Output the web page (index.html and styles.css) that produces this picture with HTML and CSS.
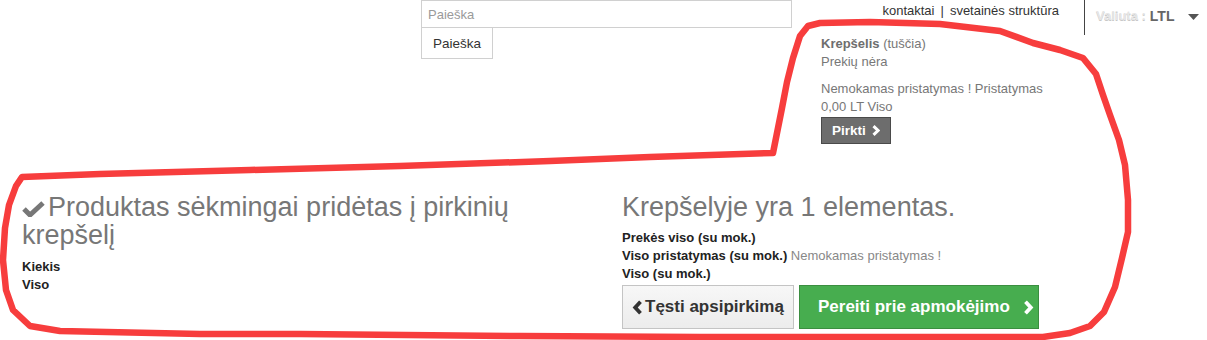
FILE: index.html
```html
<!DOCTYPE html>
<html lang="lt">
<head>
<meta charset="utf-8">
<title>Krepšelis</title>
<link rel="stylesheet" href="styles.css">
</head>
<body>
<div class="page">
  <header class="top">
    <form class="search">
      <input class="search-input" type="text" placeholder="Paieška">
      <button class="search-btn" type="button">Paieška</button>
    </form>
    <div class="side">
      <div class="toprow">
        <nav class="links"><a>kontaktai</a><span class="sep">|</span><a>svetainės struktūra</a></nav>
        <div class="currency">
          <span class="cur-label">Valiuta :</span>
          <span class="cur-value">LTL</span>
          <svg class="caret" width="11" height="6" viewBox="0 0 11 6"><path d="M0 0 H11 L5.5 6 Z" fill="#555"/></svg>
        </div>
      </div>
      <div class="cart">
        <div class="line"><b>Krepšelis</b> (tuščia)</div>
        <div class="line">Prekių nėra</div>
        <div class="line gap">Nemokamas pristatymas ! Pristatymas</div>
        <div class="line">0,00 LT Viso</div>
        <button class="buy" type="button">Pirkti<svg class="chev" width="8" height="11" viewBox="0 0 8 11"><path d="M1.5 1.2 L6 5.5 L1.5 9.8" fill="none" stroke="#fff" stroke-width="3"/></svg></button>
      </div>
    </div>
  </header>

  <main class="layer">
    <section class="added">
      <h1 class="title"><svg class="check" width="23" height="16" viewBox="0 0 23 16"><path d="M2 8 L8 14 L21 2" fill="none" stroke="#777" stroke-width="5"/></svg>Produktas sėkmingai pridėtas į pirkinių krepšelį</h1>
      <div class="info">
        <div class="row"><b>Kiekis</b></div>
        <div class="row"><b>Viso</b></div>
      </div>
    </section>
    <section class="summary">
      <h2 class="title">Krepšelyje yra 1 elementas.</h2>
      <div class="info">
        <div class="row"><b>Prekės viso (su mok.)</b></div>
        <div class="row"><b>Viso pristatymas (su mok.)</b> <span class="muted">Nemokamas pristatymas !</span></div>
        <div class="row"><b>Viso (su mok.)</b></div>
      </div>
      <div class="actions">
        <button class="btn btn-light" type="button"><svg class="chev-l" width="11" height="15" viewBox="0 0 11 15"><path d="M8.5 1.8 L3.2 7.5 L8.5 13.2" fill="none" stroke="#333" stroke-width="3.8"/></svg>Tęsti apsipirkimą</button>
        <button class="btn btn-green" type="button">Pereiti prie apmokėjimo<svg class="chev-r" width="11" height="15" viewBox="0 0 11 15"><path d="M2.5 1.8 L7.8 7.5 L2.5 13.2" fill="none" stroke="#fff" stroke-width="3.8"/></svg></button>
      </div>
    </section>
  </main>

  <svg class="scribble" width="1207" height="340" viewBox="0 0 1207 340">
    <polyline fill="none" stroke="#f73d3d" stroke-width="6.5" stroke-linejoin="round" stroke-linecap="round"
      points="773,153 778,128 782,108 787,82 793,58 800,36 808,26 820,23 870,22 940,24 1000,31 1033,43 1060,50 1083,58 1096,74 1103,95 1110,115 1119,140 1125,165 1128,200 1128,232 1122,258 1115,287 1104,312 1090,326 1070,333 1043,337 900,337 700,337 520,336 300,334 200,334 60,331 30,326 13,310 6,290 3,260 5,228 9,205 16,186 22,177 100,174 250,170 400,166 550,161 650,157 773,153"/>
  </svg>
</div>
</body>
</html>
```

FILE: styles.css
```css
* { box-sizing: border-box; }

html, body {
  margin: 0;
  padding: 0;
  background: #fff;
}

body {
  font-family: "Liberation Sans", Arial, sans-serif;
  color: #333;
}

.page {
  position: relative;
  width: 1207px;
  height: 340px;
  overflow: hidden;
}

/* ---------- header ---------- */
.top {
  display: flex;
  padding-left: 421px;
}

.search {
  width: 371px;
  margin: 0;
  display: flex;
  flex-direction: column;
  align-items: flex-start;
}

.search-input {
  width: 371px;
  height: 28px;
  margin: 0;
  border: 1px solid #d0d0d0;
  padding: 0 6px;
  font: 13px "Liberation Sans", Arial, sans-serif;
  color: #333;
  outline: none;
}
.search-input::placeholder { color: #9a9a9a; }

.search-btn {
  margin: -1px 0 0 0;
  width: 72px;
  height: 32px;
  border: 1px solid #d0d0d0;
  background: #fff;
  font: 13.5px "Liberation Sans", Arial, sans-serif;
  color: #333;
  padding: 0;
}

.side {
  margin-left: 29px;
  flex: 1;
}

.toprow {
  display: flex;
  justify-content: flex-end;
  height: 35px;
}

.links {
  font-size: 13px;
  line-height: 18px;
  padding-top: 2px;
  padding-right: 25px;
  color: #333;
}
.links .sep { margin: 0 6px; }

.currency {
  width: 123px;
  border-left: 1px solid #444;
  padding: 7px 0 0 11px;
  display: flex;
  align-items: flex-start;
  font-size: 13px;
  line-height: 18px;
}
.cur-label {
  color: #e6e6e6;
  font-weight: bold;
  text-shadow: 0 1px 0 #c8c8c8;
}
.cur-value {
  margin-left: 4px;
  color: #666;
  font-weight: bold;
  font-size: 14px;
}
.caret {
  margin: 7px 0 0 14px;
}

.cart {
  font-size: 13px;
  line-height: 18px;
  color: #777;
}
.cart b { color: #6e6e6e; }
.cart .gap { margin-top: 9px; }

.buy {
  margin-top: 1px;
  height: 27px;
  display: inline-flex;
  align-items: center;
  padding: 0 10px 0 10px;
  background: #6d6d6d;
  border: 1px solid #4a4a4a;
  color: #fff;
  font: bold 13.5px "Liberation Sans", Arial, sans-serif;
}
.buy .chev { margin-left: 6px; }

/* ---------- main ---------- */
.layer {
  display: grid;
  grid-template-columns: 570px 1fr;
  column-gap: 30px;
  padding-left: 22px;
  margin-top: 49px;
}

.title {
  margin: 0;
  font-size: 27px;
  line-height: 28px;
  font-weight: normal;
  color: #777;
}
.check {
  margin-right: 3px;
  vertical-align: -1px;
}

.info {
  font-size: 13px;
  line-height: 18px;
  color: #222;
}
.added .info { margin-top: 9px; }
.summary .info { margin-top: 8px; }
.muted { color: #888; }

.actions {
  margin-top: 2px;
  display: flex;
  gap: 5px;
}

.btn {
  height: 44px;
  display: inline-flex;
  align-items: center;
  font: bold 17px "Liberation Sans", Arial, sans-serif;
  padding: 0;
}
.btn-light {
  width: 172px;
  background: linear-gradient(#f7f7f7, #ececec);
  border: 1px solid #c4c4c4;
  color: #333;
  padding-left: 9px;
}
.chev-l { margin-right: 2px; }

.btn-green {
  width: 240px;
  background: #47ad4f;
  border: 1px solid #3b8e40;
  color: #fff;
  padding-left: 18px;
}
.chev-r { margin-left: 13px; }

/* ---------- hand-drawn annotation ---------- */
.scribble {
  position: absolute;
  left: 0;
  top: 0;
  pointer-events: none;
}
```
